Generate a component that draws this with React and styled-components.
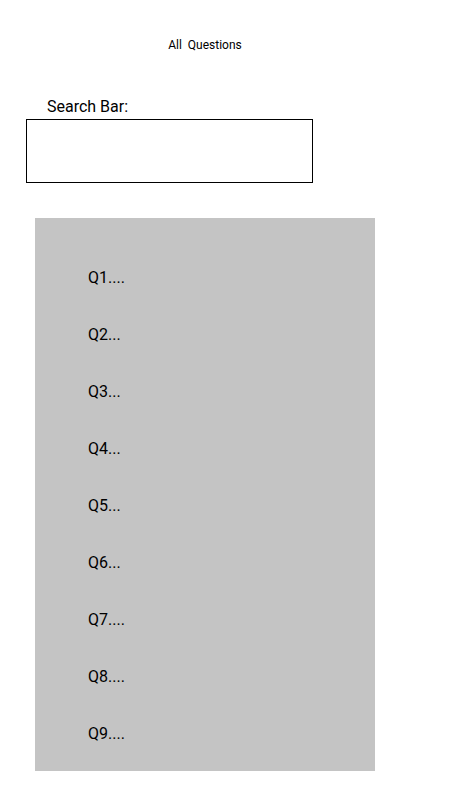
import React from "react";
import styled, { createGlobalStyle } from "styled-components";

const GlobalStyle = createGlobalStyle`
    body {
        margin: 0;
        background: #ffffff;
        font-family: Roboto, "Liberation Sans", sans-serif;
        color: #000000;
    }
`;

const Page = styled.div`
    width: 454px;
    min-height: 801px;
`;

const Title = styled.h1`
    width: 410px;
    margin: 38px 0 0;
    font-size: 12px;
    font-weight: 400;
    line-height: 14px;
    text-align: center;
    white-space: pre;
`;

const SearchSection = styled.div`
    margin-top: 45px;
    padding-left: 26px;
`;

const SearchLabel = styled.label`
    display: block;
    padding-left: 21px;
    font-size: 16px;
    line-height: 19px;
`;

const SearchBox = styled.input`
    display: block;
    box-sizing: border-box;
    width: 287px;
    height: 64px;
    margin-top: 3px;
    border: 1px solid #000000;
    border-radius: 0;
    background: transparent;
    outline: none;
    font: inherit;
    padding: 0 8px;
`;

const QuestionList = styled.ul`
    box-sizing: border-box;
    width: 340px;
    height: 553px;
    margin: 35px 0 0 35px;
    padding: 31px 0 9px 53px;
    list-style: none;
    background: #c4c4c4;
`;

const Question = styled.li`
    height: 57px;
    display: flex;
    align-items: center;
    font-size: 16px;
`;

const questions = [
    "Q1....",
    "Q2...",
    "Q3...",
    "Q4...",
    "Q5...",
    "Q6...",
    "Q7....",
    "Q8....",
    "Q9....",
];

export default function App() {
    return (
        <Page>
            <GlobalStyle />
            <Title>{"All  Questions"}</Title>
            <SearchSection>
                <SearchLabel htmlFor="search">Search Bar:</SearchLabel>
                <SearchBox id="search" type="text" />
            </SearchSection>
            <QuestionList>
                {questions.map((q) => (
                    <Question key={q}>{q}</Question>
                ))}
            </QuestionList>
        </Page>
    );
}
